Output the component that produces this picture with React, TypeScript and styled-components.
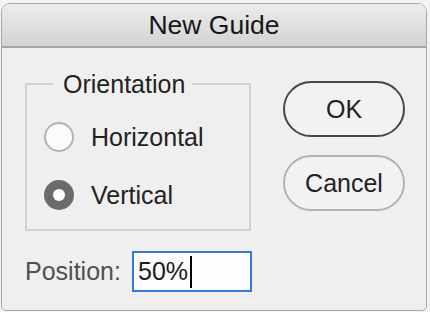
import React from "react";
import styled, { createGlobalStyle } from "styled-components";

const Global = createGlobalStyle`
  html, body { margin: 0; padding: 0; background: #f3f3f3; }
  body { width: 430px; height: 312px; overflow: hidden; font-family: "Liberation Sans", Arial, sans-serif; }
`;

const Window = styled.div`
  box-sizing: border-box;
  margin: 3px 0 0 1px;
  width: 426px;
  height: 308px;
  border: 1px solid #a9a9a9;
  border-radius: 9px 9px 5px 5px;
  background: #efefef;
  overflow: hidden;
  display: flex;
  flex-direction: column;
`;

const TitleBar = styled.div`
  box-sizing: border-box;
  height: 44px;
  flex: none;
  background: linear-gradient(#ececec, #d3d3d3);
  border-bottom: 2px solid #a3a3a3;
  display: flex;
  align-items: center;
  justify-content: center;
  font-size: 26.5px;
  color: #161616;
  padding-top: 1px;
`;

const Body = styled.div`
  display: flex;
  flex-direction: column;
  padding: 21px 20px 0 23px;
  gap: 20px;
`;

const TopRow = styled.div`
  display: flex;
  align-items: flex-start;
  gap: 32px;
`;

const Group = styled.fieldset`
  box-sizing: border-box;
  margin: 0;
  width: 226px;
  border: 2px solid #d2d2d2;
  padding: 23px 0 19px 17px;
  display: flex;
  flex-direction: column;
  gap: 28px;
`;

const Legend = styled.legend`
  margin-left: 9px;
  padding: 0 7px 0 10px;
  font-size: 25px;
  line-height: 30px;
  color: #222;
`;

const RadioRow = styled.label`
  display: flex;
  align-items: center;
  gap: 17px;
  height: 30px;
  font-size: 25px;
  color: #222;
`;

const Radio = styled.span<{ $checked?: boolean }>`
  box-sizing: border-box;
  width: 30px;
  height: 30px;
  border-radius: 50%;
  flex: none;
  display: flex;
  align-items: center;
  justify-content: center;
  background: ${(p) => (p.$checked ? "#6b6b6b" : "#fbfbfb")};
  border: ${(p) => (p.$checked ? "none" : "2px solid #b3b3b3")};
  &::after {
    content: "";
    display: ${(p) => (p.$checked ? "block" : "none")};
    width: 12px;
    height: 12px;
    border-radius: 50%;
    background: #ffffff;
  }
`;

const Buttons = styled.div`
  display: flex;
  flex-direction: column;
  gap: 18px;
  margin-top: 12px;
`;

const Button = styled.button<{ $default?: boolean }>`
  box-sizing: border-box;
  width: 122px;
  height: 56px;
  border-radius: 28px;
  border: 2px solid ${(p) => (p.$default ? "#474747" : "#b2b2b2")};
  background: #f2f2f2;
  font-family: "Liberation Sans", Arial, sans-serif;
  font-size: 25px;
  color: #222;
  padding: 0;
`;

const PositionRow = styled.div`
  display: flex;
  align-items: center;
  gap: 8px;
`;

const PositionLabel = styled.span`
  font-size: 25px;
  color: #4f4f4f;
  width: 99px;
`;

const Field = styled.div`
  box-sizing: border-box;
  width: 120px;
  height: 41px;
  border: 2px solid #2c7de2;
  background: #fdfdfd;
  display: flex;
  align-items: center;
  padding-left: 4px;
  font-size: 25px;
  color: #1c1c1c;
`;

const Caret = styled.span`
  width: 2px;
  height: 32px;
  background: #000;
  margin-left: 2px;
`;

export default function App() {
  return (
    <>
      <Global />
      <Window>
        <TitleBar>New Guide</TitleBar>
        <Body>
          <TopRow>
            <Group>
              <Legend>Orientation</Legend>
              <RadioRow>
                <Radio />
                Horizontal
              </RadioRow>
              <RadioRow>
                <Radio $checked />
                Vertical
              </RadioRow>
            </Group>
            <Buttons>
              <Button $default>OK</Button>
              <Button>Cancel</Button>
            </Buttons>
          </TopRow>
          <PositionRow>
            <PositionLabel>Position:</PositionLabel>
            <Field>
              50%
              <Caret />
            </Field>
          </PositionRow>
        </Body>
      </Window>
    </>
  );
}
